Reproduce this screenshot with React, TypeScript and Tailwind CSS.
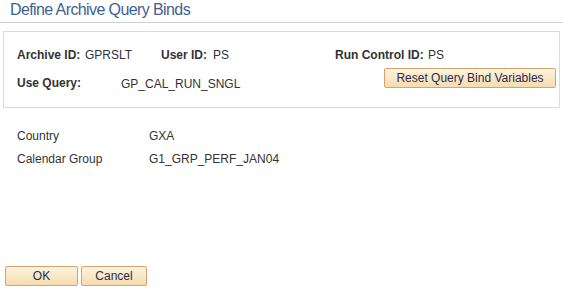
import React from "react";

const btn =
  "h-[20px] rounded-[2px] border border-[#d5a46c] bg-gradient-to-b from-[#fdf3df] to-[#f6dcae] text-[12px] leading-[18px] text-[#2b2b4b]";

export default function App() {
  return (
    <div className="relative h-[289px] w-[563px] bg-white font-['Liberation_Sans',Arial,sans-serif] text-[12px] leading-[14px] text-[#333]">
      <div className="h-[23px] border-b border-[#cfcfcf] pl-[10px] pt-[1px] text-[16px] leading-[18px] tracking-[-0.6px] text-[#3f5f8f]">
        Define Archive Query Binds
      </div>

      <div className="mx-[3px] mt-[8px] h-[77px] border border-[#dcdcdc] pl-[13px] pt-[16px]">
        <div className="flex">
          <span className="w-[68px] font-bold">Archive ID:</span>
          <span className="w-[76px]">GPRSLT</span>
          <span className="w-[52px] font-bold">User ID:</span>
          <span className="w-[122px]">PS</span>
          <span className="w-[93px] font-bold">Run Control ID:</span>
          <span>PS</span>
        </div>
        <div className="mt-[6px] flex items-start">
          <span className="mt-[8px] w-[104px] font-bold">Use Query:</span>
          <span className="mt-[9px] w-[263px]">GP_CAL_RUN_SNGL</span>
          <button className={btn + " w-[172px]"}>Reset Query Bind Variables</button>
        </div>
      </div>

      <div className="mt-[21px] grid grid-cols-[132px_1fr] gap-y-[9px] pl-[17px]">
        <span>Country</span>
        <span>GXA</span>
        <span>Calendar Group</span>
        <span>G1_GRP_PERF_JAN04</span>
      </div>

      <div className="absolute left-[5px] top-[266px] flex gap-[3px]">
        <button className={btn + " w-[73px]"}>OK</button>
        <button className={btn + " w-[66px]"}>Cancel</button>
      </div>
    </div>
  );
}
